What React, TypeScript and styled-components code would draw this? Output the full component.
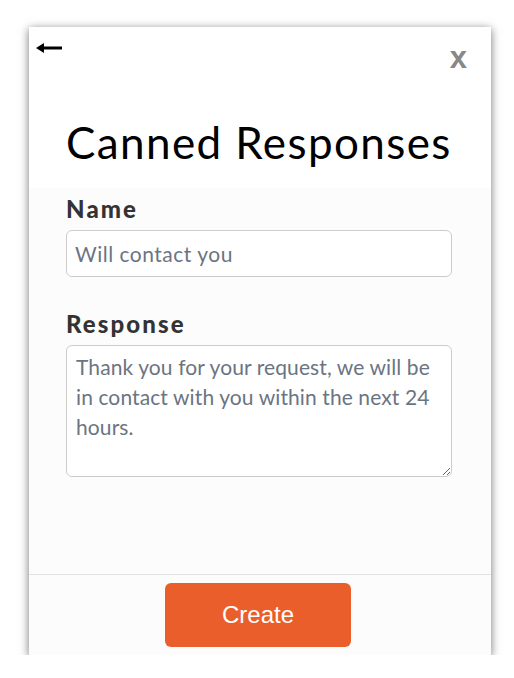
import React from "react";
import styled, { createGlobalStyle } from "styled-components";

const Global = createGlobalStyle`
  html, body { margin: 0; padding: 0; background: #ffffff; }
  body { font-family: Lato, "Open Sans", sans-serif; }
  * { box-sizing: border-box; }
`;

const Page = styled.div`
  padding: 27px 0 0 29px;
`;

const Card = styled.div`
  width: 462px;
  height: 628px;
  display: flex;
  flex-direction: column;
  background: #fcfcfc;
  box-shadow: 0 2px 9px rgba(0, 0, 0, 0.55);
`;

const Header = styled.div`
  position: relative;
  height: 161px;
  background: #ffffff;
  display: flex;
  align-items: flex-end;
  padding: 0 0 0 37px;
`;

const BackButton = styled.button`
  position: absolute;
  left: 7px;
  top: 15px;
  border: 0;
  background: none;
  padding: 0;
  width: 26px;
  height: 12px;
  display: flex;
  cursor: pointer;
`;

const CloseButton = styled.button`
  position: absolute;
  right: 24px;
  top: 16px;
  border: 0;
  background: none;
  padding: 0;
  font-family: "Liberation Sans", Arial, sans-serif;
  font-weight: 700;
  font-size: 31px;
  line-height: 30px;
  color: #888888;
  cursor: pointer;
`;

const Title = styled.h1`
  margin: 0 0 22px 0;
  font-family: Lato, sans-serif;
  font-weight: 400;
  font-size: 44px;
  line-height: 48px;
  letter-spacing: 1.4px;
  color: #000000;
`;

const Form = styled.div`
  flex: 1;
  display: flex;
  flex-direction: column;
  padding: 4px 39px 0 37px;
`;

const Field = styled.div<{ $gap?: number }>`
  display: flex;
  flex-direction: column;
  margin-bottom: ${(p) => p.$gap ?? 0}px;
`;

const Label = styled.label`
  font-family: Lato, sans-serif;
  font-weight: 900;
  font-size: 24px;
  line-height: 34px;
  letter-spacing: 2.1px;
  color: #333333;
  margin-bottom: 4px;
`;

const Input = styled.input`
  width: 100%;
  height: 47px;
  border: 1px solid #cccccc;
  border-radius: 6px;
  background: #ffffff;
  padding: 0 8px;
  font-family: Lato, sans-serif;
  font-size: 21px;
  letter-spacing: 0.5px;
  color: #6b7482;
  outline: none;
`;

const TextArea = styled.textarea`
  width: 100%;
  height: 132px;
  border: 1px solid #cccccc;
  border-radius: 6px;
  background: #ffffff;
  padding: 6px 9px;
  font-family: Lato, sans-serif;
  font-size: 21px;
  line-height: 30px;
  letter-spacing: 0.1px;
  color: #6b7482;
  outline: none;
  resize: vertical;
  display: block;
`;

const Footer = styled.div`
  height: 81px;
  border-top: 1px solid #e2e2e2;
  display: flex;
  justify-content: center;
  padding-top: 8px;
  padding-right: 4px;
`;

const CreateButton = styled.button`
  width: 186px;
  height: 64px;
  border: 0;
  border-radius: 6px;
  background: #ea5e2c;
  color: #ffffff;
  font-family: "Liberation Sans", Arial, sans-serif;
  font-size: 24px;
  cursor: pointer;
`;

export default function App() {
  return (
    <>
      <Global />
      <Page>
        <Card>
          <Header>
            <BackButton aria-label="Back">
              <svg width="26" height="12" viewBox="0 0 26 12">
                <path d="M0 6 L8 1 L8 4.5 L26 4.5 L26 7.5 L8 7.5 L8 11 Z" fill="#000" />
              </svg>
            </BackButton>
            <CloseButton aria-label="Close">x</CloseButton>
            <Title>Canned Responses</Title>
          </Header>
          <Form>
            <Field $gap={30}>
              <Label>Name</Label>
              <Input defaultValue="Will contact you" />
            </Field>
            <Field>
              <Label>Response</Label>
              <TextArea defaultValue="Thank you for your request, we will be in contact with you within the next 24 hours." />
            </Field>
          </Form>
          <Footer>
            <CreateButton>Create</CreateButton>
          </Footer>
        </Card>
      </Page>
    </>
  );
}
